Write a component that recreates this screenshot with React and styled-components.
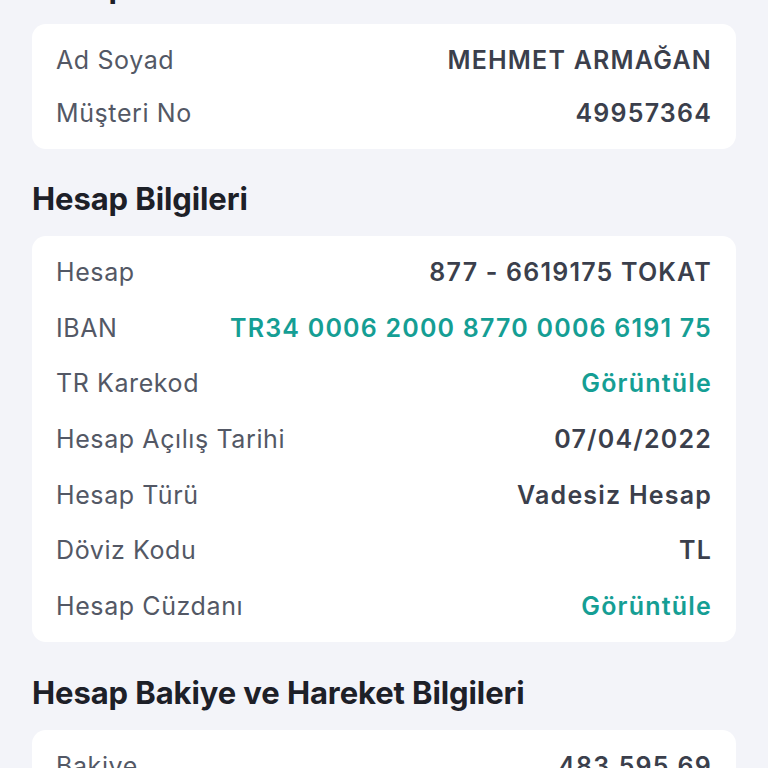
import styled, { createGlobalStyle } from "styled-components"

const GlobalStyle = createGlobalStyle`
    html, body {
        margin: 0;
        padding: 0;
        background-color: #f3f4f9;
        font-family: Inter, "Noto Sans", "Liberation Sans", sans-serif;
        -webkit-font-smoothing: antialiased;
        overflow: hidden;
    }
`

const customer = [
    { label: "Ad Soyad", value: "MEHMET ARMAĞAN" },
    { label: "Müşteri No", value: "49957364" },
]

const account = [
    { label: "Hesap", value: "877 - 6619175 TOKAT" },
    { label: "IBAN", value: "TR34 0006 2000 8770 0006 6191 75", link: true },
    { label: "TR Karekod", value: "Görüntüle", link: true },
    { label: "Hesap Açılış Tarihi", value: "07/04/2022" },
    { label: "Hesap Türü", value: "Vadesiz Hesap" },
    { label: "Döviz Kodu", value: "TL" },
    { label: "Hesap Cüzdanı", value: "Görüntüle", link: true },
]

const balance = [
    { label: "Bakiye", value: "483.595,69" },
]

function Card({ rows, rowHeight, pad }) {
    return (
        <Kart $pad={pad}>
            {rows.map((r) => (
                <Satir key={r.label} $h={rowHeight}>
                    <Etiket>{r.label}</Etiket>
                    <Deger $link={r.link}>{r.value}</Deger>
                </Satir>
            ))}
        </Kart>
    )
}

export default function App() {
    return (
        <Sayfa>
            <GlobalStyle />
            <Baslik>Hesap Sahibi</Baslik>
            <Card rows={customer} rowHeight={53} pad={9.5} />
            <Baslik>Hesap Bilgileri</Baslik>
            <Card rows={account} rowHeight={55.7} pad={8} />
            <Baslik $top={13}>Hesap Bakiye ve Hareket Bilgileri</Baslik>
            <Card rows={balance} rowHeight={55.7} pad={8} />
        </Sayfa>
    )
}

const Sayfa = styled.div`
    display: flex;
    flex-direction: column;
    padding: 0 32px 40px;
    margin-top: -63px;
`

const Baslik = styled.h2`
    margin: 0;
    height: ${(p) => (p.$top ? 88 : 87)}px;
    flex-shrink: 0;
    display: flex;
    align-items: center;
    padding-top: ${(p) => p.$top || 11}px;
    box-sizing: border-box;
    font-size: 31px;
    font-weight: 700;
    color: #1d2028;
    letter-spacing: -0.1px;
`

const Kart = styled.div`
    background-color: #ffffff;
    border-radius: 14px;
    padding: ${(p) => p.$pad}px 24px;
    display: flex;
    flex-direction: column;
    flex-shrink: 0;
`

const Satir = styled.div`
    display: flex;
    justify-content: space-between;
    align-items: center;
    height: ${(p) => p.$h}px;
    font-size: 25px;
`

const Etiket = styled.span`
    color: #535865;
    font-weight: 400;
    letter-spacing: 0.6px;
`

const Deger = styled.span`
    color: ${(p) => (p.$link ? "#159e94" : "#3b3f4c")};
    font-weight: 600;
    letter-spacing: 1.2px;
`
